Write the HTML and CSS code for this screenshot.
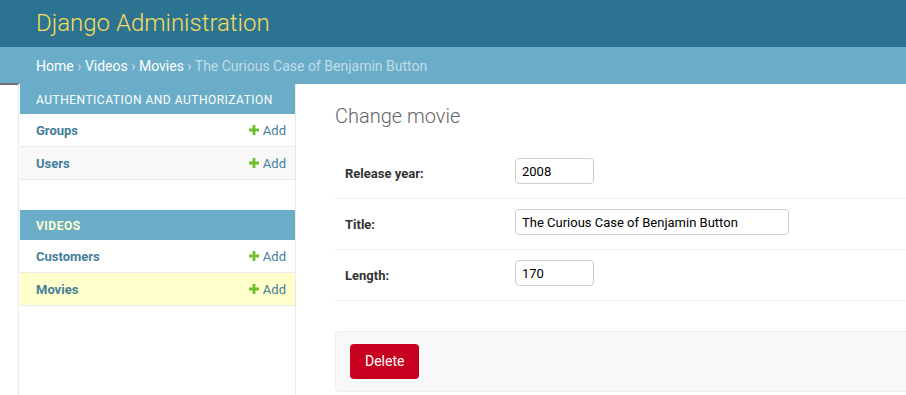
FILE: index.html
```html
<!DOCTYPE html>
<html lang="en">
  <head>
    <meta charset="UTF-8" />
    <meta name="viewport" content="width=device-width, initial-scale=1.0" />
    <title>Change movie | Django site admin</title>
    <link rel="stylesheet" href="styles.css">
  </head>
  <body>
    <div id="header">
      <h1 class="branding">Django Administration</h1>
    </div>

    <div class="breadcrumbs">
      <a href="#">Home</a> <span class="sep">›</span>
      <a href="#">Videos</a> <span class="sep">›</span>
      <a href="#">Movies</a> <span class="sep">›</span>
      <span class="current">The Curious Case of Benjamin Button</span>
    </div>

    <div class="main">
      <div class="toggle-nav"></div>

      <nav class="nav-sidebar">
        <div class="module">
          <div class="caption">Authentication and Authorization</div>
          <div class="model-row">
            <a href="#" class="model-name">Groups</a>
            <a href="#" class="addlink">
              <svg width="10" height="10" viewBox="0 0 10 10"><path d="M3.6 0h2.8v3.6H10v2.8H6.4V10H3.6V6.4H0V3.6h3.6z" fill="#70bf2b"/></svg>
              Add
            </a>
          </div>
          <div class="model-row alt">
            <a href="#" class="model-name">Users</a>
            <a href="#" class="addlink">
              <svg width="10" height="10" viewBox="0 0 10 10"><path d="M3.6 0h2.8v3.6H10v2.8H6.4V10H3.6V6.4H0V3.6h3.6z" fill="#70bf2b"/></svg>
              Add
            </a>
          </div>
        </div>

        <div class="module current-app">
          <div class="caption">Videos</div>
          <div class="model-row">
            <a href="#" class="model-name">Customers</a>
            <a href="#" class="addlink">
              <svg width="10" height="10" viewBox="0 0 10 10"><path d="M3.6 0h2.8v3.6H10v2.8H6.4V10H3.6V6.4H0V3.6h3.6z" fill="#70bf2b"/></svg>
              Add
            </a>
          </div>
          <div class="model-row current-model">
            <a href="#" class="model-name">Movies</a>
            <a href="#" class="addlink">
              <svg width="10" height="10" viewBox="0 0 10 10"><path d="M3.6 0h2.8v3.6H10v2.8H6.4V10H3.6V6.4H0V3.6h3.6z" fill="#70bf2b"/></svg>
              Add
            </a>
          </div>
        </div>
      </nav>

      <div class="content">
        <h1>Change movie</h1>

        <form>
          <div class="form-row">
            <label for="id_release_year">Release year:</label>
            <input type="text" id="id_release_year" class="short" value="2008" />
          </div>
          <div class="form-row">
            <label for="id_title">Title:</label>
            <input type="text" id="id_title" class="long" value="The Curious Case of Benjamin Button" />
          </div>
          <div class="form-row">
            <label for="id_length">Length:</label>
            <input type="text" id="id_length" class="short" value="170" />
          </div>

          <div class="submit-row">
            <a href="#" class="deletelink">Delete</a>
          </div>
        </form>
      </div>
    </div>
  </body>
</html>
```

FILE: styles.css
```css
* {
  margin: 0;
  padding: 0;
  box-sizing: border-box;
}

body {
  font-family: Roboto, "Liberation Sans", Arial, sans-serif;
  font-size: 14px;
  color: #333;
  background: #fff;
  overflow: hidden;
}

a {
  text-decoration: none;
}

#header {
  background: #2c7391;
  height: 47px;
  padding: 0 36px;
  display: flex;
  align-items: center;
}

.branding {
  font-size: 24px;
  font-weight: 300;
  color: #f5dd5d;
  line-height: 28px;
  margin-top: -1px;
}

.breadcrumbs {
  background: #69adc8;
  height: 37px;
  padding: 11px 36px 9px;
  color: #c4dce8;
  line-height: 17px;
}

.breadcrumbs a {
  color: #fff;
}

.breadcrumbs .sep {
  color: #c4dce8;
}

.main {
  display: flex;
  height: calc(100vh - 84px);
}

.toggle-nav {
  flex: 0 0 19px;
  border-top: 2px solid #707070;
  border-right: 1px solid #eaeaea;
  margin-top: -1px;
}

.nav-sidebar {
  flex: 0 0 277px;
  padding-left: 1px;
  border-right: 1px solid #eaeaea;
}

.module {
  margin-bottom: 30px;
}

.caption {
  background: #69adc8;
  color: #fff;
  font-size: 12px;
  letter-spacing: 0.5px;
  text-transform: uppercase;
  line-height: 14px;
  padding: 9px 16px 7px;
}

.current-app .caption {
  color: #ffc;
  font-weight: 700;
}

.model-row {
  display: flex;
  justify-content: space-between;
  align-items: center;
  height: 33px;
  padding: 0 9px 0 16px;
  border-bottom: 1px solid #eaeaea;
  font-size: 13px;
}

.model-row.alt {
  background: #f8f8f8;
}

.model-row.current-model {
  background: #ffc;
}

.model-name {
  color: #447e9b;
  font-weight: 700;
}

.addlink {
  color: #447e9b;
  display: flex;
  align-items: center;
  gap: 4px;
}

.content {
  flex: 1;
  padding: 20px 0 0 39px;
  margin-right: -40px;
}

.content h1 {
  font-size: 20px;
  font-weight: 300;
  color: #666;
  line-height: 24px;
  margin-bottom: 20px;
}

.form-row {
  display: flex;
  padding: 10px 10px 14px;
  border-bottom: 1px solid #eee;
  font-size: 13px;
}

.form-row label {
  flex: 0 0 170px;
  padding-top: 8px;
  font-weight: 700;
  color: #333;
  line-height: 16px;
}

.form-row input {
  height: 26px;
  padding: 4px 6px;
  border: 1px solid #ccc;
  border-radius: 4px;
  font-family: Roboto, "Liberation Sans", Arial, sans-serif;
  font-size: 13px;
  color: #000;
}

.form-row input.short {
  width: 79px;
}

.form-row input.long {
  width: 274px;
}

.submit-row {
  margin-top: 30px;
  background: #f8f8f8;
  border: 1px solid #eee;
  border-radius: 4px;
  padding: 12px 14px;
}

.deletelink {
  display: inline-block;
  background: #c8001f;
  color: #fff;
  border-radius: 4px;
  height: 35px;
  line-height: 35px;
  padding: 0 15px;
  font-size: 14px;
}
```
